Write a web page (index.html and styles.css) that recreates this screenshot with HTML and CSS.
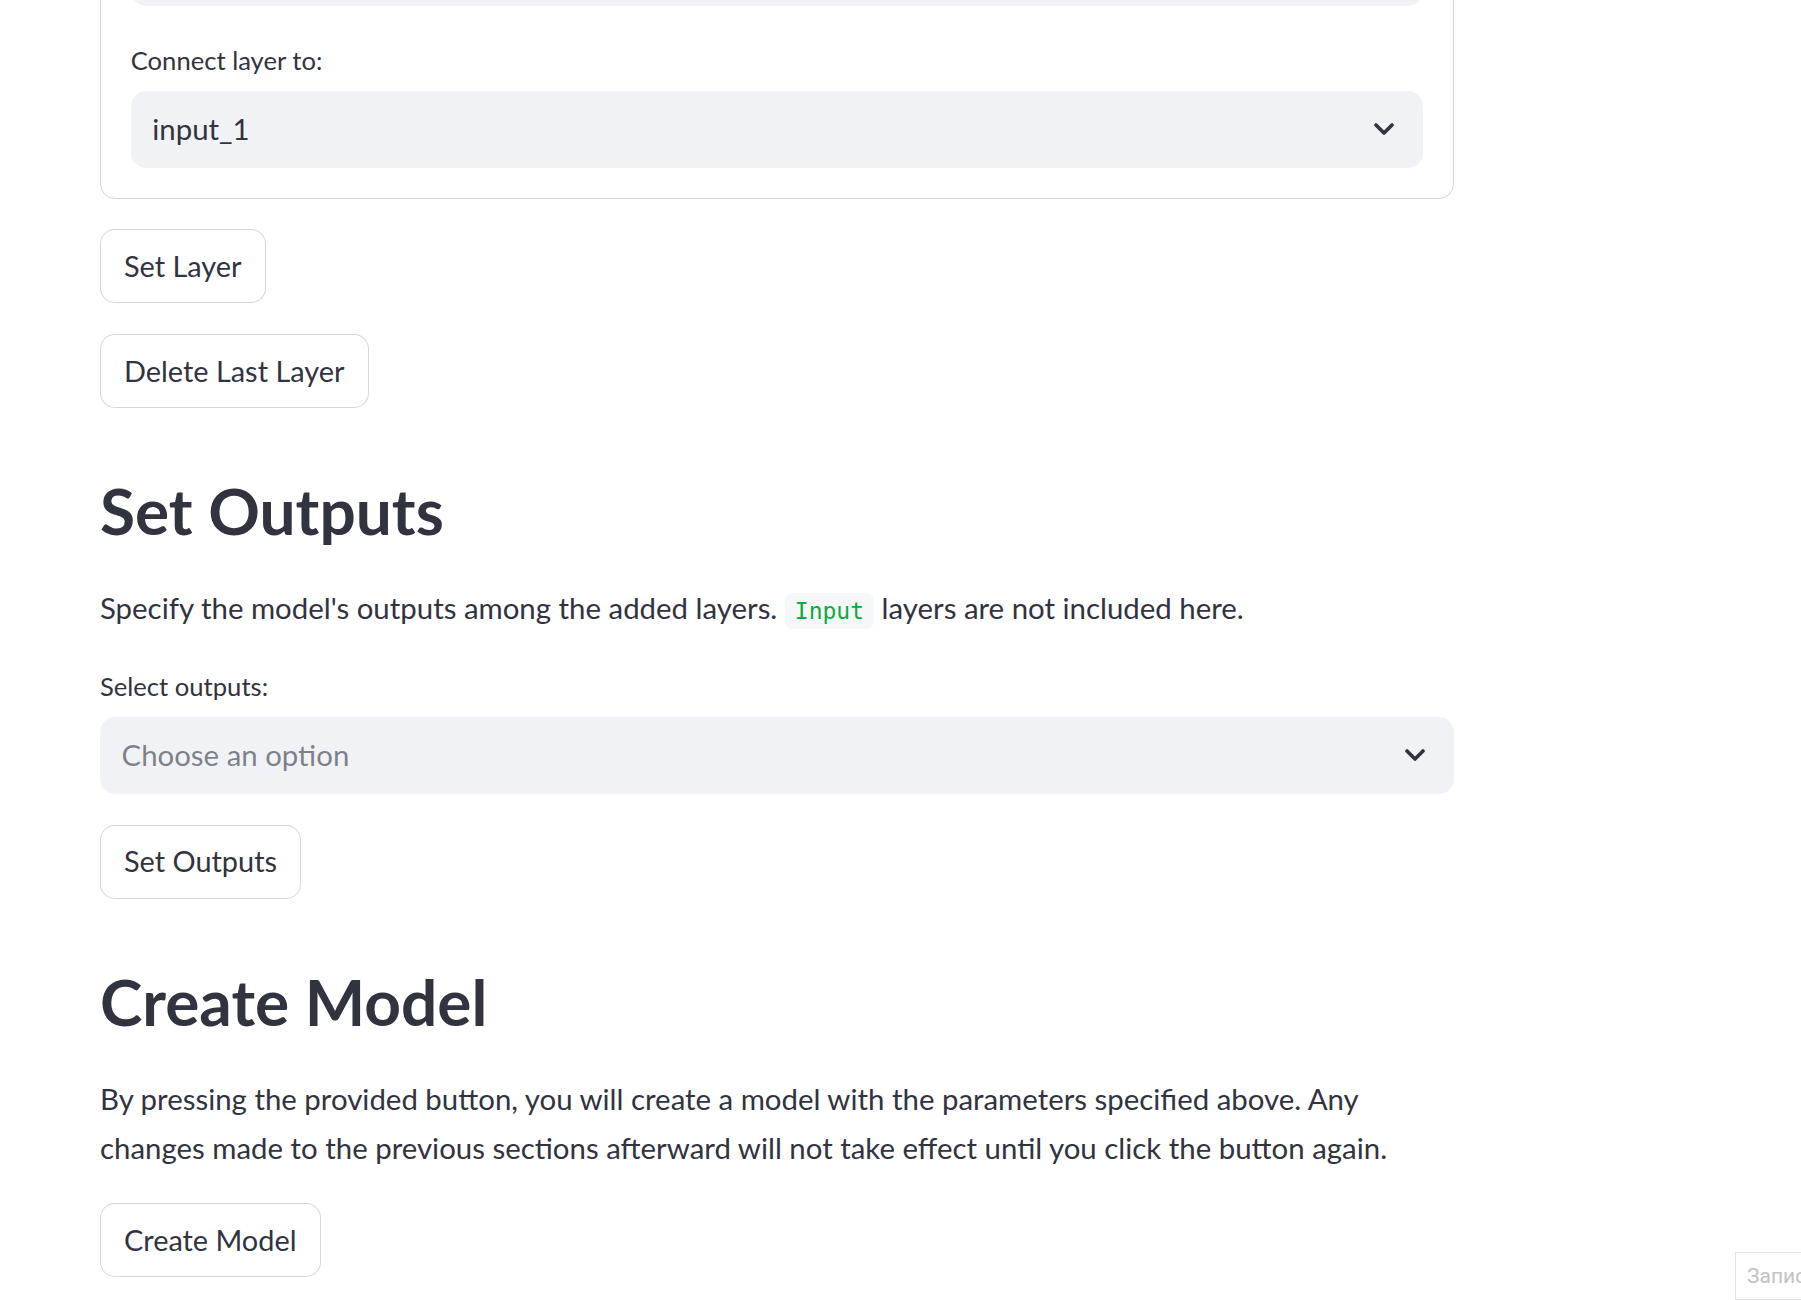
FILE: index.html
```html
<!DOCTYPE html>
<html lang="en">
<head>
<meta charset="utf-8">
<title>Model builder</title>
<link rel="stylesheet" href="styles.css">
</head>
<body>
<main class="main">
  <div class="block">
    <div class="bordered">
      <div class="field">
        <div class="select">
          <span class="select-value"></span>
          <svg class="chevron" width="20" height="12" viewBox="0 0 20 12"><polyline points="2,2 10,10 18,2"/></svg>
        </div>
      </div>
      <div class="field">
        <label class="field-label">Connect layer to:</label>
        <div class="select">
          <span class="select-value">input_1</span>
          <svg class="chevron" width="20" height="12" viewBox="0 0 20 12"><polyline points="2,2 10,10 18,2"/></svg>
        </div>
      </div>
    </div>

    <div class="row"><button class="btn">Set Layer</button></div>
    <div class="row"><button class="btn">Delete Last Layer</button></div>

    <h2 class="heading">Set Outputs</h2>
    <p class="text">Specify the model's outputs among the added layers. <code class="code">Input</code> layers are not included here.</p>

    <div class="field">
      <label class="field-label">Select outputs:</label>
      <div class="select">
        <span class="select-value placeholder">Choose an option</span>
        <svg class="chevron" width="20" height="12" viewBox="0 0 20 12"><polyline points="2,2 10,10 18,2"/></svg>
      </div>
    </div>
    <div class="row"><button class="btn">Set Outputs</button></div>

    <h2 class="heading">Create Model</h2>
    <p class="text">By pressing the provided button, you will create a model with the parameters specified above. Any changes made to the previous sections afterward will not take effect until you click the button again.</p>
    <div class="row"><button class="btn">Create Model</button></div>
  </div>
</main>
<div class="rec-widget">Запис</div>
</body>
</html>
```

FILE: styles.css
```css
html, body {
  margin: 0;
  padding: 0;
  background: #ffffff;
}

body {
  font-family: "Source Sans Pro", Lato, "Noto Sans", sans-serif;
  color: #31333f;
  overflow: hidden;
}

.main {
  padding-left: 100px;
  margin-top: -101.3px;
}

.block {
  width: 1354px;
  display: flex;
  flex-direction: column;
  gap: 30.77px;
}

.bordered {
  border: 1px solid rgba(49, 51, 63, 0.2);
  border-radius: 15px;
  padding: 29.77px;
  display: flex;
  flex-direction: column;
  gap: 30.77px;
}

.field {
  display: flex;
  flex-direction: column;
}

.field-label {
  display: flex;
  align-items: center;
  height: 46.15px;
  margin-bottom: 7.69px;
  font-size: 25.6px;
  line-height: 46.15px;
  color: #31333f;
}

.select {
  height: 76.92px;
  background: #f0f2f6;
  border-radius: 15px;
  display: flex;
  align-items: center;
  padding: 0 29px 0 21.5px;
  box-sizing: border-box;
}

.select-value {
  flex: 1;
  font-size: 29.4px;
  line-height: 76.92px;
  color: #31333f;
}

.select-value.placeholder {
  color: rgba(49, 51, 63, 0.6);
}

.chevron {
  display: block;
  fill: none;
  stroke: #31333f;
  stroke-width: 3.6;
  stroke-linecap: round;
  stroke-linejoin: round;
}

.row {
  display: flex;
}

.btn {
  font-family: inherit;
  font-size: 28.9px;
  line-height: 1.6;
  color: #31333f;
  background: #ffffff;
  border: 1px solid rgba(49, 51, 63, 0.2);
  border-radius: 15px;
  height: 73.85px;
  padding: 0 23px;
  box-sizing: border-box;
}

.heading {
  margin: 0;
  padding: 30.77px 0 0;
  font-size: 64px;
  font-weight: 700;
  line-height: 83px;
  color: #31333f;
}

.text {
  margin: 0;
  font-size: 29.4px;
  line-height: 49.23px;
  color: #31333f;
}

.code {
  font-family: "DejaVu Sans Mono", "Liberation Mono", monospace;
  font-size: 23px;
  line-height: 1;
  color: #09ab3b;
  background: #f6f7f9;
  border-radius: 7.7px;
  padding: 5px 10px;
}

.rec-widget {
  position: fixed;
  right: 0;
  bottom: 0;
  width: 66px;
  height: 48px;
  box-sizing: border-box;
  border: 1px solid #e4e4e4;
  border-right: none;
  background: #ffffff;
  overflow: hidden;
  white-space: nowrap;
  padding-left: 11px;
  font-family: Roboto, "Noto Sans", sans-serif;
  font-size: 21px;
  line-height: 46px;
  color: #c2c2c2;
}
```
